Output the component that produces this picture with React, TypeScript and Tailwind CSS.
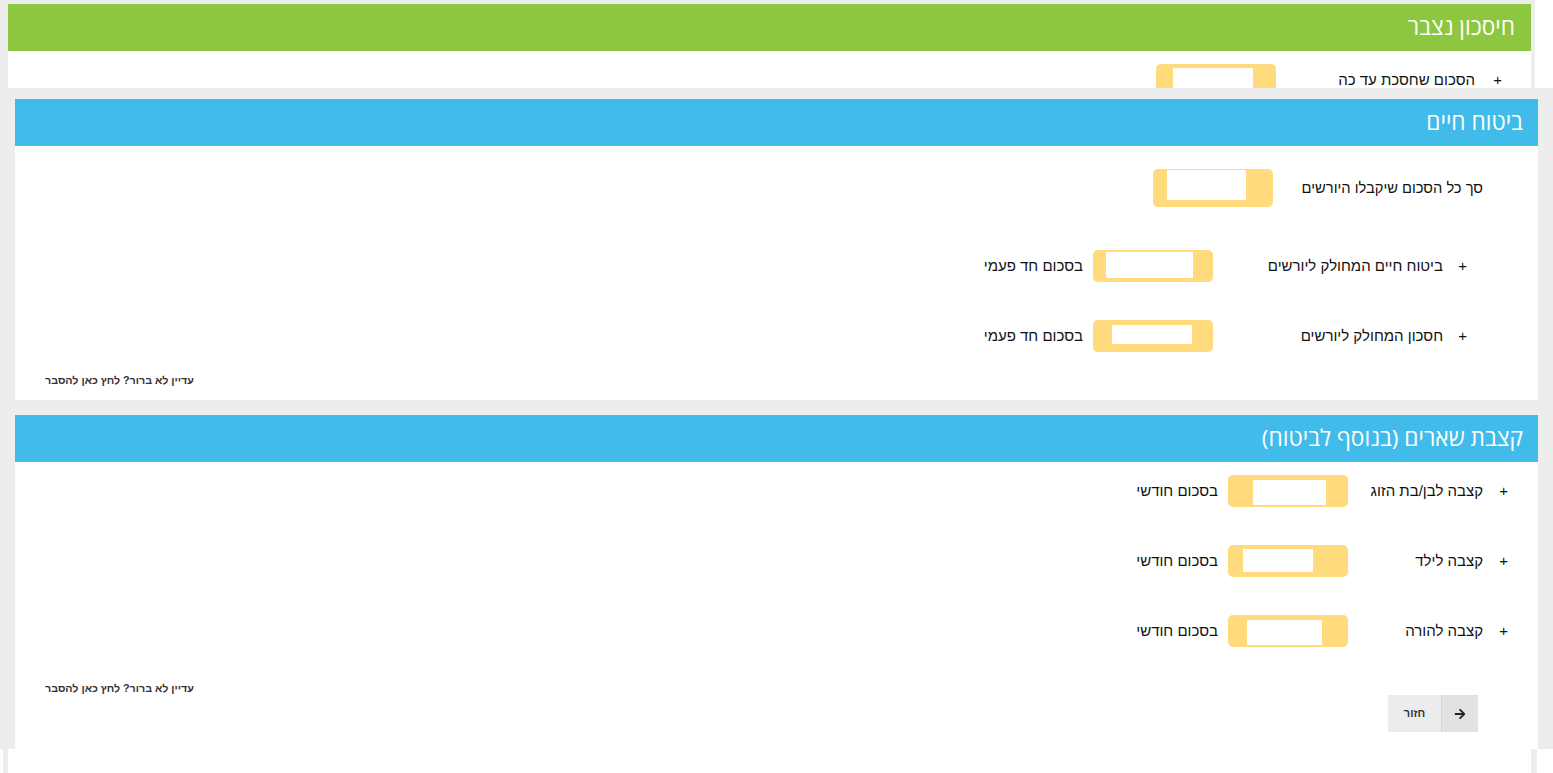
import React from "react";
import { FaArrowRight } from "react-icons/fa";

function YBox({ outer, inner }: { outer: string; inner: string }) {
  return (
    <div dir="ltr" className={"shrink-0 w-[120px] rounded-[5px] bg-[#ffdb7e] flex items-start " + outer}>
      <div className={"bg-white " + inner} />
    </div>
  );
}

const headerText = "text-white text-[22.7px] font-medium [font-family:'Open_Sans','Liberation_Sans',sans-serif]";

function Hint() {
  return (
    <div className="pl-[30px] text-left text-[10.7px] leading-[14px] font-bold text-[#333]">
      <span>עדיין לא ברור? לחץ כאן להסבר</span>
    </div>
  );
}

export default function App() {
  return (
    <div
      dir="ltr"
      className="w-[1553px] h-[773px] overflow-hidden bg-white text-[15px] text-[#111] [font-family:'Liberation_Sans',Arial,sans-serif]"
    >
      {/* Piece 1 */}
      <div className="w-[1535px] h-[88px] bg-[#ededed] pt-[4px] pl-[8px] pr-[4px] flex flex-col overflow-hidden">
        <div dir="rtl" className="h-[47px] shrink-0 bg-[#8dc63f] flex items-center pr-[16px]">
          <span className={headerText}>חיסכון נצבר</span>
        </div>
        <div dir="rtl" className="flex-1 bg-white overflow-hidden">
          <div className="flex items-center pt-[13px] pr-[29px]">
            <span className="w-[8px] text-center shrink-0">+</span>
            <span className="w-[199px] shrink-0 mr-[19px]">הסכום שחסכת עד כה</span>
            <YBox outer="h-[32px] pt-[4px] pl-[17px]" inner="w-[80px] h-[24px]" />
          </div>
        </div>
      </div>

      {/* Piece 2 */}
      <div dir="rtl" className="h-[661px] bg-[#ededed] pt-[11px] px-[15px] flex flex-col overflow-hidden">
        {/* Section A */}
        <div className="h-[47px] shrink-0 bg-[#41bbe9] flex items-center pr-[15px]">
          <span className={headerText}>ביטוח חיים</span>
        </div>
        <div className="h-[254px] shrink-0 bg-white flex flex-col">
          <div className="flex items-center mt-[23px] pr-[55px]">
            <span className="w-[210px] shrink-0 text-[14.7px]">סך כל הסכום שיקבלו היורשים</span>
            <YBox outer="h-[38px] pt-[1px] pl-[14px]" inner="w-[79px] h-[30px]" />
          </div>
          <div className="flex items-center mt-[43px] pr-[71px]">
            <span className="w-[8px] text-center shrink-0">+</span>
            <span className="w-[230px] shrink-0 mr-[16px]">ביטוח חיים המחולק ליורשים</span>
            <YBox outer="h-[32px] pt-[2px] pl-[13px]" inner="w-[87px] h-[26px]" />
            <span className="mr-[10px]">בסכום חד פעמי</span>
          </div>
          <div className="flex items-center mt-[38px] pr-[71px]">
            <span className="w-[8px] text-center shrink-0">+</span>
            <span className="w-[230px] shrink-0 mr-[16px]">חסכון המחולק ליורשים</span>
            <YBox outer="h-[32px] pt-[5px] pl-[19px]" inner="w-[80px] h-[19px]" />
            <span className="mr-[10px]">בסכום חד פעמי</span>
          </div>
          <div className="mt-[21px]">
            <Hint />
          </div>
        </div>

        <div className="h-[15px] shrink-0" />

        {/* Section B */}
        <div className="h-[47px] shrink-0 bg-[#41bbe9] flex items-center pr-[15px]">
          <span className={headerText}>קצבת שארים (בנוסף לביטוח)</span>
        </div>
        <div className="flex-1 bg-white flex flex-col">
          <div className="flex items-center mt-[13px] pr-[30px]">
            <span className="w-[8px] text-center shrink-0">+</span>
            <span className="w-[135px] shrink-0 mr-[17px]">קצבה לבן/בת הזוג</span>
            <YBox outer="h-[32px] pt-[5px] pl-[25px]" inner="w-[73px] h-[25px]" />
            <span className="mr-[10px]">בסכום חודשי</span>
          </div>
          <div className="flex items-center mt-[38px] pr-[30px]">
            <span className="w-[8px] text-center shrink-0">+</span>
            <span className="w-[135px] shrink-0 mr-[17px]">קצבה לילד</span>
            <YBox outer="h-[32px] pt-[4px] pl-[15px]" inner="w-[70px] h-[23px]" />
            <span className="mr-[10px]">בסכום חודשי</span>
          </div>
          <div className="flex items-center mt-[38px] pr-[30px]">
            <span className="w-[8px] text-center shrink-0">+</span>
            <span className="w-[135px] shrink-0 mr-[17px]">קצבה להורה</span>
            <YBox outer="h-[32px] pt-[5px] pl-[19px]" inner="w-[75px] h-[25px]" />
            <span className="mr-[10px]">בסכום חודשי</span>
          </div>
          <div className="mt-[34px]">
            <Hint />
          </div>
          <div className="flex pr-[60px]">
            <button className="flex h-[37px] items-stretch">
              <span className="w-[36px] bg-[#e2e2e2] flex items-center justify-center text-[#222]">
                <FaArrowRight className="w-[12px] h-[12px]" />
              </span>
              <span className="w-[54px] bg-[#ececec] border-r border-[#d2d2d2] flex items-center justify-center text-[11px] font-bold text-[#333]">
                חזור
              </span>
            </button>
          </div>
        </div>
      </div>

      {/* Piece 3 */}
      <div className="h-[24px] flex bg-white">
        <div className="w-[3px] shrink-0" />
        <div className="w-[5px] shrink-0 bg-[#ededed]" />
        <div className="flex-1" />
        <div className="w-[6px] shrink-0 bg-[#ededed]" />
        <div className="w-[16px] shrink-0" />
      </div>
    </div>
  );
}
